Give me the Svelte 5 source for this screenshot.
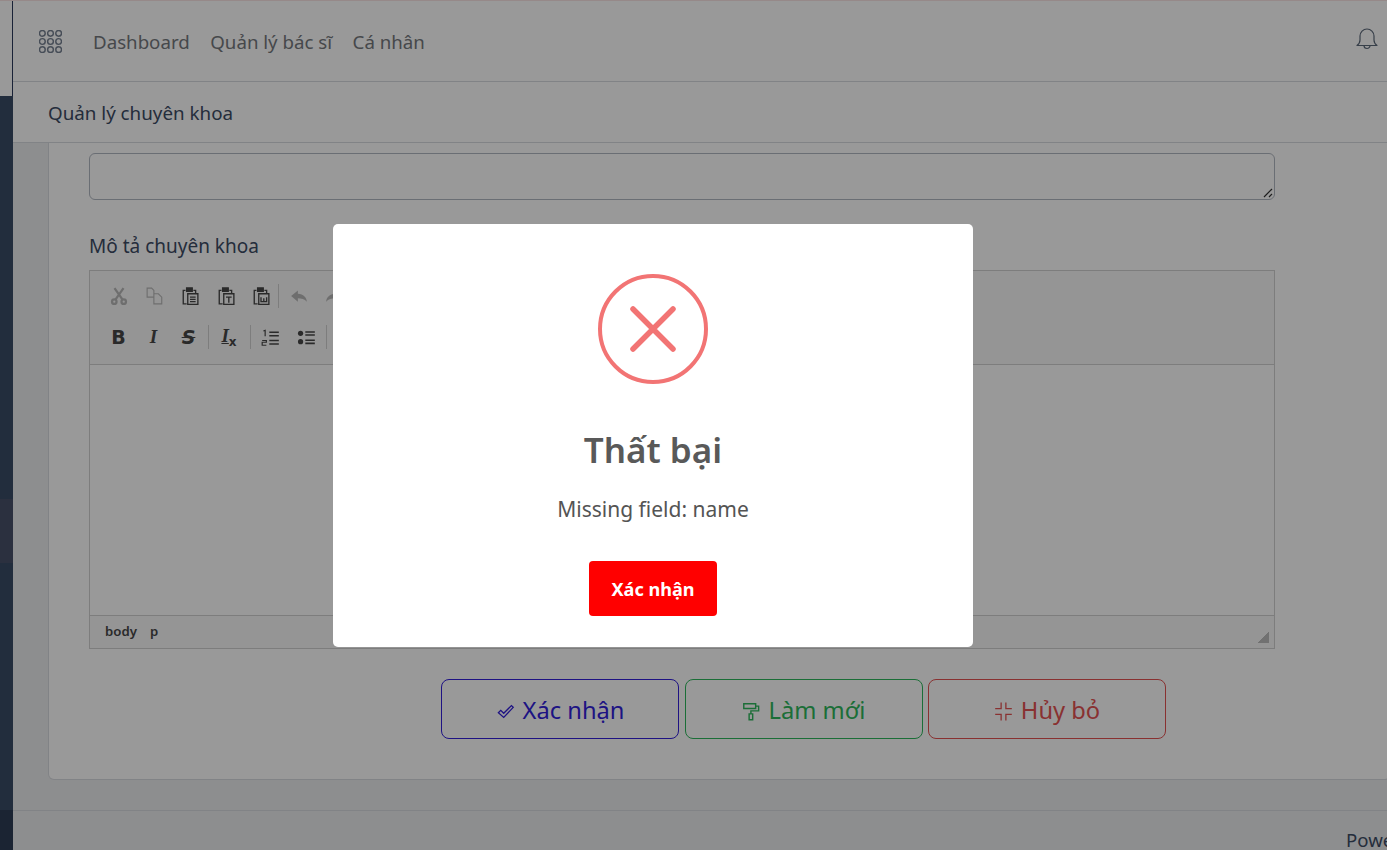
<script>
	const topNav = ['Dashboard', 'Quản lý bác sĩ', 'Cá nhân'];
</script>

<div class="layout">
	<aside class="sidebar">
		<div class="sidebar-top"></div>
		<div class="side-fill"></div>
		<div class="side-active"></div>
		<div class="side-fill grow"></div>
		<div class="side-bottom"></div>
	</aside>
	<div class="wrapper">
		<header class="header">
			<div class="nav-row">
				<svg class="grid-icon" viewBox="0 0 24 24" fill="none" stroke="currentColor" stroke-width="1.5">
					{#each [3.5, 12, 20.5] as y}
						{#each [3.5, 12, 20.5] as x}
							<circle cx={x} cy={y} r="3" />
						{/each}
					{/each}
				</svg>
				<nav class="nav">
					{#each topNav as item}
						<span>{item}</span>
					{/each}
				</nav>
				<svg class="bell" viewBox="0 0 22 24" fill="none" stroke="currentColor" stroke-width="1.2">
					<path d="M1 18.5c2-1.5 3-3 3-5.5V9a7 7 0 0 1 14 0v4c0 2.5 1 4 3 5.5z" stroke-linejoin="round" />
					<path d="M8 18.5a3 3 0 0 0 6 0" />
				</svg>
			</div>
			<div class="crumb-row">Quản lý chuyên khoa</div>
		</header>

		<main class="body">
			<div class="card">
				<div class="textarea">
					<svg class="grip" viewBox="0 0 10 10" stroke="currentColor" stroke-width="1.2">
						<path d="M1 9 9 1M6 9l3-3" />
					</svg>
				</div>
				<label class="field-label" for="desc">Mô tả chuyên khoa</label>
				<div class="editor" id="desc">
					<div class="toolbar">
						<div class="tool-row">
							<svg class="tool off" viewBox="0 0 16 16" fill="none" stroke="currentColor" stroke-width="2">
								<path d="M4 1l7 10M12 1 5 11" />
								<circle cx="3.8" cy="13" r="2" />
								<circle cx="12.2" cy="13" r="2" />
							</svg>
							<svg class="tool off" viewBox="0 0 16 16" fill="none" stroke="currentColor" stroke-width="1">
								<path d="M1 1h4l2 2v6H1zM7 6h4l3 3v6H7z" />
							</svg>
							<svg class="tool" viewBox="0 0 16 16" fill="none" stroke="currentColor" stroke-width="1.2">
								<path d="M4 3H2v12h3" />
								<path d="M5 .8h5v3H5z" fill="currentColor" />
								<path d="M11 3h2v3M6 6h9v9.5H6zM8 9h5M8 11h5M8 13h5" />
							</svg>
							<svg class="tool" viewBox="0 0 16 16" fill="none" stroke="currentColor" stroke-width="1.2">
								<path d="M4 3H2v12h3" />
								<path d="M5 .8h5v3H5z" fill="currentColor" />
								<path d="M11 3h2v3M6 6h9v9.5H6zM8 9h5M10.5 9v5" />
							</svg>
							<svg class="tool" viewBox="0 0 16 16" fill="none" stroke="currentColor" stroke-width="1.2">
								<path d="M4 3H2v12h3" />
								<path d="M5 .8h5v3H5z" fill="currentColor" />
								<path d="M11 3h2v3M6 6h9v9.5H6zM8 9v4h5V9M10.5 10v3" />
							</svg>
							<span class="sep"></span>
							<svg class="tool off" viewBox="0 0 16 16" fill="currentColor">
								<path d="M7 3 1 8l6 5v-3c3 0 6 .5 8 3-.5-4-3-6.5-8-7z" />
							</svg>
							<svg class="tool off" viewBox="0 0 16 16" fill="currentColor">
								<path d="M9 3l6 5-6 5v-3c-3 0-6 .5-8 3 .5-4 3-6.5 8-7z" />
							</svg>
						</div>
						<div class="tool-row second">
							<span class="glyph bold">B</span>
							<span class="glyph italic">I</span>
							<span class="glyph strike">S</span>
							<span class="sep"></span>
							<span class="glyph clear">I<small>x</small></span>
							<span class="sep"></span>
							<svg class="tool" viewBox="0 0 16 16" fill="none" stroke="currentColor" stroke-width="1.3">
								<path d="M7 3.5h8M7 6.5h8M7 10.5h8M7 13.5h8" />
								<path d="M2 2.5 3.5 2v5M1 10.5h3.5V12H1v2.5h3.5" stroke-width="1" />
							</svg>
							<svg class="tool" viewBox="0 0 16 16" fill="currentColor">
								<circle cx="3" cy="4.5" r="2.2" />
								<circle cx="3" cy="11.5" r="2.2" />
								<path d="M7 2.7h8V4H7zM7 5.3h8v1.3H7zM7 9.7h8V11H7zM7 12.3h8v1.3H7z" />
							</svg>
							<span class="sep"></span>
						</div>
					</div>
					<div class="edit-area"></div>
					<div class="statusbar">
						<span>body</span>
						<span>p</span>
						<i class="resize"></i>
					</div>
				</div>
				<div class="actions">
					<button class="btn blue">
						<svg viewBox="0 0 16 16" fill="none" stroke="currentColor" stroke-width="1.1">
							<path d="M2 9l2-2 2.5 2.5L13 3l1.5 1.5-8 8.5z" />
						</svg>
						Xác nhận
					</button>
					<button class="btn green">
						<svg viewBox="0 0 16 16" fill="none" stroke="currentColor" stroke-width="1.2">
							<path d="M1.5 1.5h10v4h-10zM11.5 3.5H14v4H7.5v2M6 10h3v5H6z" />
						</svg>
						Làm mới
					</button>
					<button class="btn red">
						<svg viewBox="0 0 16 16" fill="none" stroke="currentColor" stroke-width="1.1">
							<path d="M1 5.5h5v-5M15 5.5h-5v-5M1 10.5h5v5M15 10.5h-5v5" />
						</svg>
						Hủy bỏ
					</button>
				</div>
			</div>
		</main>

		<footer class="footer">Powered by</footer>
	</div>
</div>

<div class="overlay">
	<div class="dialog">
		<svg class="x-icon" viewBox="0 0 110 110" fill="none" stroke="#f27474">
			<circle cx="55" cy="55" r="53" stroke-width="4" />
			<path d="M35 35l40 40M75 35 35 75" stroke-width="5.5" stroke-linecap="round" />
		</svg>
		<h2>Thất bại</h2>
		<p>Missing field: name</p>
		<button class="confirm">Xác nhận</button>
	</div>
</div>

<style>
	:global(body) {
		margin: 0;
		font-family: "Noto Sans", "Open Sans", sans-serif;
		overflow: hidden;
	}

	.layout {
		display: flex;
		height: 850px;
		overflow: hidden;
		background: #ebedef;
		border-top: 1px solid #fbe4e4;
		box-sizing: border-box;
	}

	.sidebar {
		width: 13px;
		flex: none;
		display: flex;
		flex-direction: column;
		background: #394b67;
	}

	.sidebar-top {
		height: 95px;
		background: #fff;
		border-right: 1px solid #2b3a5d;
		box-sizing: border-box;
	}

	.side-fill {
		height: 403px;
	}

	.side-fill.grow {
		height: auto;
		flex: 1;
	}

	.side-active {
		height: 64px;
		background: #49506a;
	}

	.side-bottom {
		height: 40px;
		background: #2d3c55;
	}

	.wrapper {
		flex: 1;
		min-width: 0;
		display: flex;
		flex-direction: column;
	}

	.header {
		background: #fff;
		border-bottom: 1px solid #d8dbe0;
		flex: none;
	}

	.nav-row {
		height: 80px;
		display: flex;
		align-items: center;
		padding: 0 9px 0 26px;
		border-bottom: 1px solid #d8dbe0;
	}

	.grid-icon {
		width: 23px;
		height: 23px;
		color: #768192;
	}

	.nav {
		display: flex;
		gap: 20.5px;
		margin-left: 31px;
		font-size: 18.7px;
		flex: 1;
		color: #75797e;
	}

	.bell {
		width: 22px;
		height: 24px;
		color: #5d6a7b;
		margin-top: -4px;
	}

	.crumb-row {
		height: 60px;
		display: flex;
		align-items: center;
		padding: 2px 0 0 35px;
		box-sizing: border-box;
		font-size: 18.8px;
		color: #3c4b64;
	}

	.body {
		flex: 1;
		min-height: 0;
		padding: 0 0 30px 35px;
		overflow: hidden;
	}

	.card {
		background: #fff;
		border: 1px solid #d8dbe0;
		border-top: 0;
		border-radius: 0 0 6px 6px;
		padding: 10px 115px 0 40px;
		height: 100%;
		box-sizing: border-box;
		margin-right: -4px;
	}

	.textarea {
		height: 47px;
		border: 1px solid #b1b7c1;
		border-radius: 6px;
		box-sizing: border-box;
		position: relative;
	}

	.grip {
		position: absolute;
		right: 1px;
		bottom: 1px;
		width: 10px;
		height: 10px;
		color: #333;
	}

	.field-label {
		display: block;
		margin-top: 33px;
		font-size: 19px;
		line-height: 26px;
		color: #3c4b64;
	}

	.editor {
		margin-top: 11px;
		border: 1px solid #d1d1d1;
		height: 379px;
		display: flex;
		flex-direction: column;
		box-sizing: border-box;
	}

	.toolbar {
		height: 94px;
		flex: none;
		background: #f8f8f8;
		border-bottom: 1px solid #d1d1d1;
		padding: 5px 0 0 20px;
		box-sizing: border-box;
		overflow: hidden;
	}

	.tool-row {
		display: flex;
		align-items: center;
		gap: 17.5px;
		height: 40px;
		color: #474747;
	}

	.tool-row.second {
		height: 42px;
		gap: 17px;
		margin-left: -0.5px;
	}

	.tool {
		width: 18px;
		height: 18px;
		flex: none;
	}

	.second .tool {
		width: 19px;
		height: 19px;
	}

	.tool.off {
		color: #b8b8b8;
	}

	.sep {
		width: 1px;
		height: 24px;
		background: #d1d1d1;
		margin: 0 -7px 0 -9.5px;
		flex: none;
	}

	.second .sep {
		margin: 0 -7px 0 -6.5px;
	}

	.glyph {
		font-family: "DejaVu Sans", sans-serif;
		font-size: 19px;
		line-height: 20px;
		width: 18px;
		text-align: center;
		flex: none;
	}

	.bold {
		font-weight: 700;
	}

	.italic {
		font-style: italic;
		font-weight: 700;
		font-family: "Liberation Serif", serif;
	}

	.strike {
		text-decoration: line-through;
		font-weight: 700;
		font-style: italic;
	}

	.glyph.clear {
		width: 20px;
		font-style: italic;
		font-weight: 700;
		font-family: "Liberation Serif", serif;
		text-decoration: underline;
	}

	.clear small {
		font-size: 12px;
		font-family: "DejaVu Sans", sans-serif;
		font-style: normal;
		display: inline-block;
		transform: translateY(4px);
	}

	.edit-area {
		flex: 1;
		background: #fff;
	}

	.statusbar {
		height: 33px;
		flex: none;
		background: #f8f8f8;
		border-top: 1px solid #d1d1d1;
		box-sizing: border-box;
		display: flex;
		align-items: center;
		gap: 13px;
		padding: 0 0 2px 15px;
		font-size: 13.2px;
		font-weight: 600;
		color: #474747;
		position: relative;
	}

	.resize {
		position: absolute;
		right: 5px;
		bottom: 5px;
		width: 12px;
		height: 12px;
		background: linear-gradient(135deg, transparent 50%, #bdbdbd 50%);
	}

	.actions {
		display: flex;
		gap: 5.5px;
		margin: 30px 0 0 352px;
	}

	.btn {
		width: 238px;
		height: 60px;
		flex: none;
		background: #fff;
		border: 1px solid;
		border-radius: 8px;
		font-family: inherit;
		font-size: 23.7px;
		display: flex;
		align-items: center;
		justify-content: center;
		gap: 8px;
		padding: 2px 0 0;
	}

	.btn svg {
		width: 19px;
		height: 19px;
		margin-top: 3px;
	}

	.blue {
		color: #321fdb;
		border-color: #321fdb;
	}

	.green {
		color: #2eb85c;
		border-color: #2eb85c;
	}

	.red {
		color: #e55353;
		border-color: #e55353;
	}

	.footer {
		height: 40px;
		flex: none;
		border-top: 1px solid #d8dbe0;
		background: #ebedef;
		font-size: 18.6px;
		color: #3c4b64;
		white-space: nowrap;
		overflow: hidden;
		padding: 16px 0 0 1333px;
		box-sizing: border-box;
		width: 1374px;
	}

	.overlay {
		position: fixed;
		inset: 0;
		background: rgba(0, 0, 0, 0.4);
		display: flex;
		justify-content: center;
		align-items: flex-start;
	}

	.dialog {
		width: 640px;
		height: 423px;
		margin-top: 224px;
		margin-left: -81px;
		background: #fff;
		border-radius: 5px;
		display: flex;
		flex-direction: column;
		align-items: center;
		box-sizing: border-box;
		padding-top: 50px;
	}

	.x-icon {
		width: 110px;
		height: 110px;
		flex: none;
	}

	h2 {
		margin: 42px 0 0;
		font-size: 35px;
		font-weight: 600;
		line-height: 48px;
		color: #595959;
	}

	p {
		margin: 20px 0 0;
		font-size: 21px;
		line-height: 30px;
		color: #545454;
	}

	.confirm {
		margin-top: 37px;
		width: 128px;
		height: 55px;
		background: #f00;
		color: #fff;
		border: 0;
		border-radius: 4px;
		font-family: inherit;
		font-size: 18.1px;
		font-weight: 700;
		padding: 1px 0 0;
	}
</style>
